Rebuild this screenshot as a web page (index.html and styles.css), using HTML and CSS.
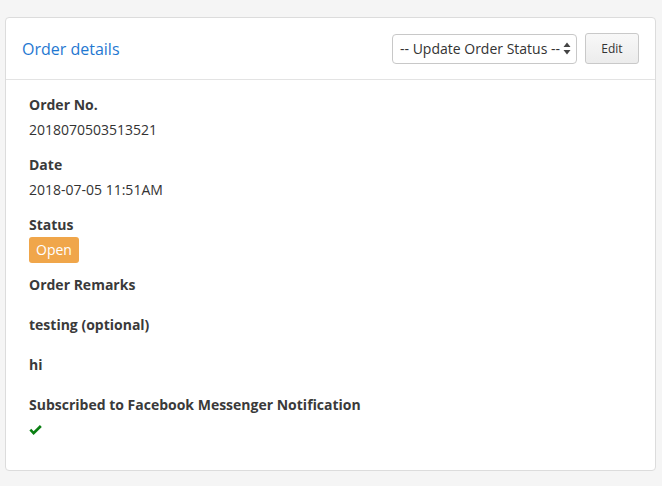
FILE: index.html
```html
<!DOCTYPE html>
<html>
<head>
<meta charset="utf-8">
<link rel="stylesheet" href="styles.css">
</head>
<body>
<div class="panel">
  <div class="panel-head">
    <div class="title">Order details</div>
    <div class="actions">
      <div class="select">
        <span class="select-text">-- Update Order Status --</span>
        <svg class="arrows" width="8" height="13" viewBox="0 0 8 13"><path d="M4 0.5 L7.5 5 L0.5 5 Z M4 12.5 L7.5 8 L0.5 8 Z" fill="#444"/></svg>
      </div>
      <button class="btn">Edit</button>
    </div>
  </div>
  <div class="panel-body">
    <div class="label">Order No.</div>
    <div class="value">2018070503513521</div>
    <div class="label">Date</div>
    <div class="value">2018-07-05 11:51AM</div>
    <div class="label">Status</div>
    <div class="value"><span class="badge">Open</span></div>
    <div class="label">Order Remarks</div>
    <div class="value"></div>
    <div class="label">testing (optional)</div>
    <div class="value"></div>
    <div class="label">hi</div>
    <div class="value"></div>
    <div class="label">Subscribed to Facebook Messenger Notification</div>
    <div class="value last"><svg class="check" width="13" height="11" viewBox="0 0 13 11"><path d="M0.4 5.6 L4.6 10 L12.8 1.9 L10.9 0.1 L4.6 6.3 L2.3 3.8 Z" fill="#0a7f12"/></svg></div>
  </div>
</div>
</body>
</html>
```

FILE: styles.css
```css
html, body {
  margin: 0;
  padding: 0;
  background: #f5f5f5;
}
body {
  font-family: "Open Sans", "Liberation Sans", sans-serif;
  color: #333;
  font-size: 14px;
  line-height: 20px;
  padding: 17px 6px 15px 5px;
}
.panel {
  background: #fff;
  border: 1px solid #dcdcdc;
  border-radius: 4px;
}
.panel-head {
  display: flex;
  align-items: center;
  justify-content: space-between;
  padding: 15px 16px;
  border-bottom: 1px solid #e3e3e3;
}
.title {
  color: #1f78d1;
  font-size: 16px;
  line-height: 30px;
}
.actions {
  display: flex;
  align-items: center;
  gap: 8px;
}
.select {
  box-sizing: border-box;
  width: 185px;
  height: 30px;
  border: 1px solid #c8c8c8;
  border-radius: 4px;
  display: flex;
  align-items: center;
  justify-content: space-between;
  padding: 0 5px 0 7px;
  background: #fff;
  color: #333;
  font-size: 14px;
}
.arrows {
  display: block;
}
.btn {
  box-sizing: border-box;
  width: 54px;
  height: 31px;
  border: 1px solid #c9c9c9;
  border-radius: 3px;
  background: linear-gradient(#f8f8f8, #ececec);
  font-family: "Open Sans", "Liberation Sans", sans-serif;
  font-size: 12px;
  color: #333;
  padding: 0;
}
.panel-body {
  padding: 15px 23px;
  display: flex;
  flex-direction: column;
  align-items: flex-start;
}
.label {
  font-weight: bold;
  color: #3a3a3a;
  margin-bottom: 5px;
}
.value {
  margin-bottom: 15px;
}
.value.last {
  height: 20px;
  display: flex;
  align-items: center;
}
.badge {
  display: inline-block;
  background: #f0a64a;
  color: #fff;
  border-radius: 3px;
  padding: 3px 7px;
  line-height: 20px;
  margin: -3px 0;
  vertical-align: top;
}
.check {
  display: block;
}
```
